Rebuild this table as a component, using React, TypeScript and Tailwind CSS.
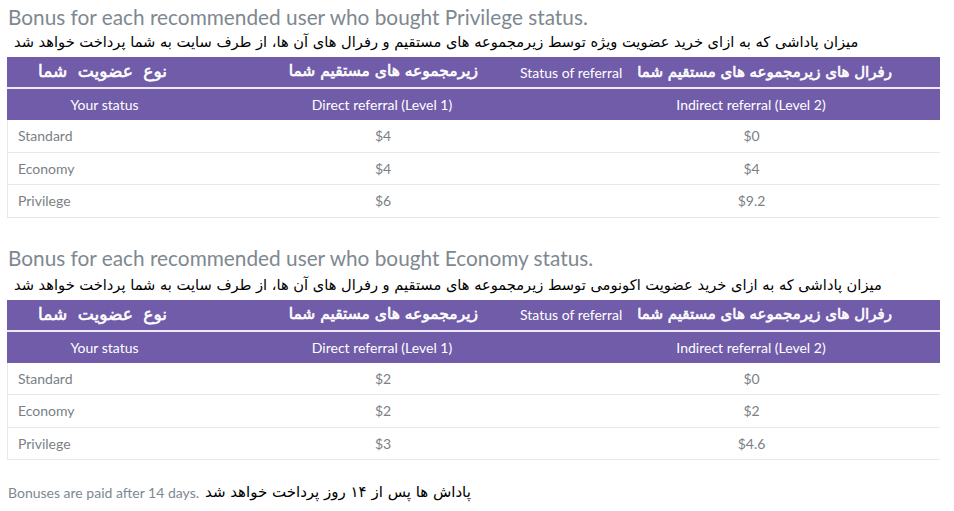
type Row = { status: string; direct: string; indirect: string };

interface BonusTableProps {
  title: string;
  note: string;
  rows: Row[];
  noteGap: string;
}

const persian = "font-['Tahoma','DejaVu_Sans',sans-serif] whitespace-nowrap";
const persianBold = `${persian} text-[15.5px] [-webkit-text-stroke:0.6px_white]`;

function BonusTable({ title, note, rows, noteGap }: BonusTableProps) {
  return (
    <div className="flex flex-col">
      <h2 className="text-[20.8px] leading-[26px] text-[#7e8891] pl-[8px] pt-[4px] whitespace-nowrap">{title}</h2>
      <div className={`pl-[14px] h-[24px] flex items-center ${noteGap}`}>
        <span dir="rtl" className={`${persian} text-[14.65px] text-black`}>
          {note}
        </span>
      </div>
      <div className="ml-[7px] w-[933px] mt-[3px]">
        <div className="flex h-[32px] items-center bg-[#705ca9] text-white border-b-2 border-[#ece9f5]">
          <div className="w-[195px] flex justify-center">
            <span dir="rtl" className={`${persianBold} text-[17px] [word-spacing:5px] pr-[4px]`}>نوع عضویت شما</span>
          </div>
          <div className="flex-1 flex items-center">
            <div className="w-[276px] flex justify-end">
              <span dir="rtl" className={persianBold}>
                زیرمجموعه های مستقیم شما
              </span>
            </div>
            <span className="text-[14px] ml-[42px] whitespace-nowrap">Status of referral</span>
            <span dir="rtl" className={`${persianBold} text-[15px] ml-[15px]`}>
              رفرال های زیرمجموعه های مستقیم شما
            </span>
          </div>
        </div>
        <div className="flex h-[31px] items-center bg-[#705ca9] text-white text-[14px]">
          <div className="w-[195px] text-center">Your status</div>
          <div className="w-[360px] text-center">Direct referral (Level 1)</div>
          <div className="flex-1 text-center">Indirect referral (Level 2)</div>
        </div>
        {rows.map((row) => (
          <div
            key={row.status}
            className="flex h-[32.5px] items-center border-b border-l border-[#e8e8ec] text-[14px] text-[#7a7f85]"
          >
            <div className="w-[195px] pl-[10px]">{row.status}</div>
            <div className="w-[360px] text-center">{row.direct}</div>
            <div className="flex-1 text-center">{row.indirect}</div>
          </div>
        ))}
      </div>
    </div>
  );
}

export default function App() {
  return (
    <div className="w-[954px] h-[511px] bg-white font-['Lato',sans-serif] overflow-hidden">
      <BonusTable
        title="Bonus for each recommended user who bought Privilege status."
        note="میزان پاداشی که به ازای خرید عضویت ویژه توسط زیرمجموعه های مستقیم و رفرال های آن ها، از طرف سایت به شما پرداخت خواهد شد"
        noteGap="mt-0"
        rows={[
          { status: "Standard", direct: "$4", indirect: "$0" },
          { status: "Economy", direct: "$4", indirect: "$4" },
          { status: "Privilege", direct: "$6", indirect: "$9.2" },
        ]}
      />
      <div className="h-[23px]" />
      <BonusTable
        title="Bonus for each recommended user who bought Economy status."
        note="میزان پاداشی که به ازای خرید عضویت اکونومی توسط زیرمجموعه های مستقیم و رفرال های آن ها، از طرف سایت به شما پرداخت خواهد شد"
        noteGap="mt-[2px]"
        rows={[
          { status: "Standard", direct: "$2", indirect: "$0" },
          { status: "Economy", direct: "$2", indirect: "$2" },
          { status: "Privilege", direct: "$3", indirect: "$4.6" },
        ]}
      />
      <div className="flex items-center pl-[8px] mt-[21px] gap-[6px]">
        <span className="text-[14px] text-[#7e8891]">Bonuses are paid after 14 days.</span>
        <span dir="rtl" className={`${persian} text-[15px] text-black`}>
          پاداش ها پس از ۱۴ روز پرداخت خواهد شد
        </span>
      </div>
    </div>
  );
}
